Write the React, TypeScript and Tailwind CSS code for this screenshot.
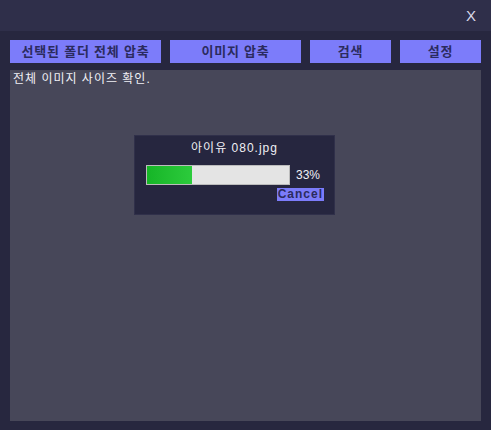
import React from "react";

const font = { fontFamily: '"Liberation Sans", "Noto Sans CJK KR", sans-serif' };

export default function App() {
  return (
    <div className="w-[491px] h-[430px] bg-[#27273f] flex flex-col overflow-hidden" style={font}>
      <div className="h-[31px] bg-[#2f2f4a] flex items-center justify-end pr-[15px]">
        <span className="text-[#d8d8e8] text-[15px] leading-none">X</span>
      </div>
      <div className="flex flex-col px-[10px] pt-[9px]">
        <div className="flex gap-[9px] h-[23px]">
          {[
            ["선택된 폴더 전체 압축", "w-[151px]"],
            ["이미지 압축", "w-[131px]"],
            ["검색", "w-[81px]"],
            ["설정", "w-[81px]"],
          ].map(([t, w]) => (
            <div
              key={t}
              className={`${w} bg-[#7c7cfa] flex items-center justify-center text-[13px] font-bold text-[#2b2b5e] tracking-[0.8px]`}
            >
              {t}
            </div>
          ))}
        </div>
        <div className="mt-[7px] h-[351px] bg-[#474759] flex flex-col">
          <div className="text-[12px] text-[#f0f0f5] pl-[3px] pt-[2px] leading-[15px] tracking-[1px]">전체 이미지 사이즈 확인.</div>
          <div className="ml-[124px] mt-[48px] w-[201px] h-[80px] bg-[#26263f] border border-[#30304a] flex flex-col">
            <div className="text-center text-[12px] text-[#f0f0f5] mt-[5px] leading-[15px] tracking-[1px]">아이유 080.jpg</div>
            <div className="flex items-center mt-[9px] ml-[11px]">
              <div className="w-[144px] h-[20px] bg-[#e4e4e4] border border-[#bcbcbc] flex">
                <div className="w-[45px] h-full bg-gradient-to-r from-[#15b527] to-[#2ccb3c]" />
              </div>
              <span className="ml-[6px] text-[12px] text-[#f0f0f5]">33%</span>
            </div>
            <div className="flex justify-end mr-[10px] mt-[3px]">
              <span className="bg-[#7c7cfa] text-[#2b2b5e] text-[12px] font-bold leading-[13px] px-[1px] tracking-[1px]">Cancel</span>
            </div>
          </div>
        </div>
      </div>
    </div>
  );
}
